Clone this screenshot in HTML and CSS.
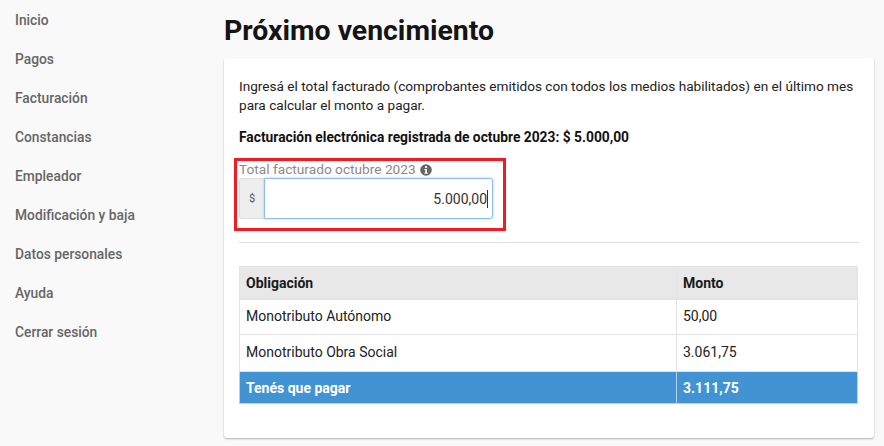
FILE: index.html
```html
<!DOCTYPE html>
<html lang="es">
<head>
    <meta charset="UTF-8">
    <meta name="viewport" content="width=device-width, initial-scale=1.0">
    <title>Próximo vencimiento</title>
    <link rel="stylesheet" href="styles.css">
</head>
<body>

    <nav class="side-nav">
        <a href="#">Inicio</a>
        <a href="#">Pagos</a>
        <a href="#">Facturación</a>
        <a href="#">Constancias</a>
        <a href="#">Empleador</a>
        <a href="#">Modificación y baja</a>
        <a href="#">Datos personales</a>
        <a href="#">Ayuda</a>
        <a href="#">Cerrar sesión</a>
    </nav>

    <main class="content">
        <h1>Próximo vencimiento</h1>

        <section class="card">
            <p class="intro">Ingresá el total facturado (comprobantes emitidos con todos los medios habilitados) en el último mes para calcular el monto a pagar.</p>
            <p class="registered">Facturación electrónica registrada de octubre 2023: $ 5.000,00</p>

            <div class="highlight-box">
                <label for="total">Total facturado octubre 2023
                    <svg class="info-icon" viewBox="0 0 12 12" width="12" height="12" aria-hidden="true">
                        <circle cx="6" cy="6" r="5.8" fill="#666"/>
                        <rect x="5" y="2.2" width="2" height="1.8" fill="#fff"/>
                        <path d="M4.4 5h2.6v3.8h.8v1H4.4v-1h.8V6h-.8z" fill="#fff"/>
                    </svg>
                </label>
                <div class="input-row">
                    <span class="addon">$</span>
                    <div class="amount-input" id="total">5.000,00<span class="caret"></span></div>
                </div>
            </div>

            <hr>

            <table>
                <thead>
                    <tr><th>Obligación</th><th class="col-amount">Monto</th></tr>
                </thead>
                <tbody>
                    <tr><td>Monotributo Autónomo</td><td>50,00</td></tr>
                    <tr class="tall-row"><td>Monotributo Obra Social</td><td>3.061,75</td></tr>
                    <tr class="total-row"><td>Tenés que pagar</td><td>3.111,75</td></tr>
                </tbody>
            </table>
        </section>
    </main>

</body>
</html>
```

FILE: styles.css
```css
* {
    box-sizing: border-box;
}

body {
    font-family: Roboto, "Liberation Sans", sans-serif;
    background-color: #f9f9f9;
    color: #1a1a1a;
    display: flex;
    width: 884px;
    height: 446px;
    margin: 0;
    overflow: hidden;
}

/* menu lateral */
.side-nav {
    width: 224px;
    flex-shrink: 0;
    display: flex;
    flex-direction: column;
    gap: 19px;
    padding: 10px 0 0 15px;
}

.side-nav a {
    color: #666;
    font-size: 13.8px;
    font-weight: 500;
    line-height: 20px;
    text-decoration: none;
}

.content {
    width: 650px;
}

h1 {
    margin: 0;
    padding-top: 13px;
    height: 58px;
    font-size: 28.4px;
    line-height: 36px;
    font-weight: 700;
    color: #141414;
}

/* tarjeta */
.card {
    height: 380px;
    padding: 19px 15px 0;
    background-color: #fff;
    border-radius: 3px;
    box-shadow: 0 1px 2px rgba(0, 0, 0, 0.3);
}

.intro {
    margin: 0;
    font-size: 13.6px;
    line-height: 19px;
    color: #222;
}

.registered {
    margin: 12px 0 0;
    font-size: 13.8px;
    line-height: 20px;
    font-weight: 700;
    color: #111;
}

/* recuadro rojo */
.highlight-box {
    width: 272px;
    height: 73px;
    margin: 11px 0 -1px -5px;
    padding: 0 0 0 2px;
    border: 3px solid #ee1c25;
}

.highlight-box label {
    display: flex;
    align-items: center;
    gap: 4px;
    height: 17px;
    font-size: 13.7px;
    line-height: 17px;
    color: #8a8a8a;
}

.input-row {
    display: flex;
    width: 254px;
    height: 41px;
}

.addon {
    width: 25px;
    display: flex;
    align-items: center;
    justify-content: center;
    background-color: #eee;
    border: 1px solid #ddd;
    border-right: none;
    border-radius: 3px 0 0 3px;
    font-size: 11px;
    color: #555;
}

.amount-input {
    flex: 1;
    display: flex;
    align-items: center;
    justify-content: flex-end;
    padding-right: 4px;
    border: 1px solid #8dbde8;
    border-radius: 0 3px 3px 0;
    box-shadow: 0 0 3px rgba(102, 175, 233, 0.5);
    font-size: 14px;
    color: #333;
}

.caret {
    width: 1px;
    height: 18px;
    background-color: #333;
}

hr {
    height: 1px;
    margin: 12px 0 23px;
    border: none;
    background-color: #ddd;
}

/* tabla */
table {
    width: 619px;
    border-collapse: collapse;
    table-layout: fixed;
    font-size: 14px;
}

th, td {
    padding: 0 6px;
    text-align: left;
    border: 1px solid #e4e4e4;
}

th {
    height: 32px;
    padding-top: 2px;
    background-color: #e8e8e8;
    border-bottom-width: 2px;
    font-weight: 700;
    color: #1a1a1a;
}

td {
    height: 36px;
    padding-bottom: 2px;
    color: #222;
}

.tall-row td {
    height: 37px;
    padding-bottom: 3px;
}

.total-row td {
    height: 32px;
    padding-bottom: 0;
    background-color: #4293d3;
    border-color: #b5d3ec;
    color: #fff;
    font-weight: 700;
}

.col-amount {
    width: 181px;
}
```
